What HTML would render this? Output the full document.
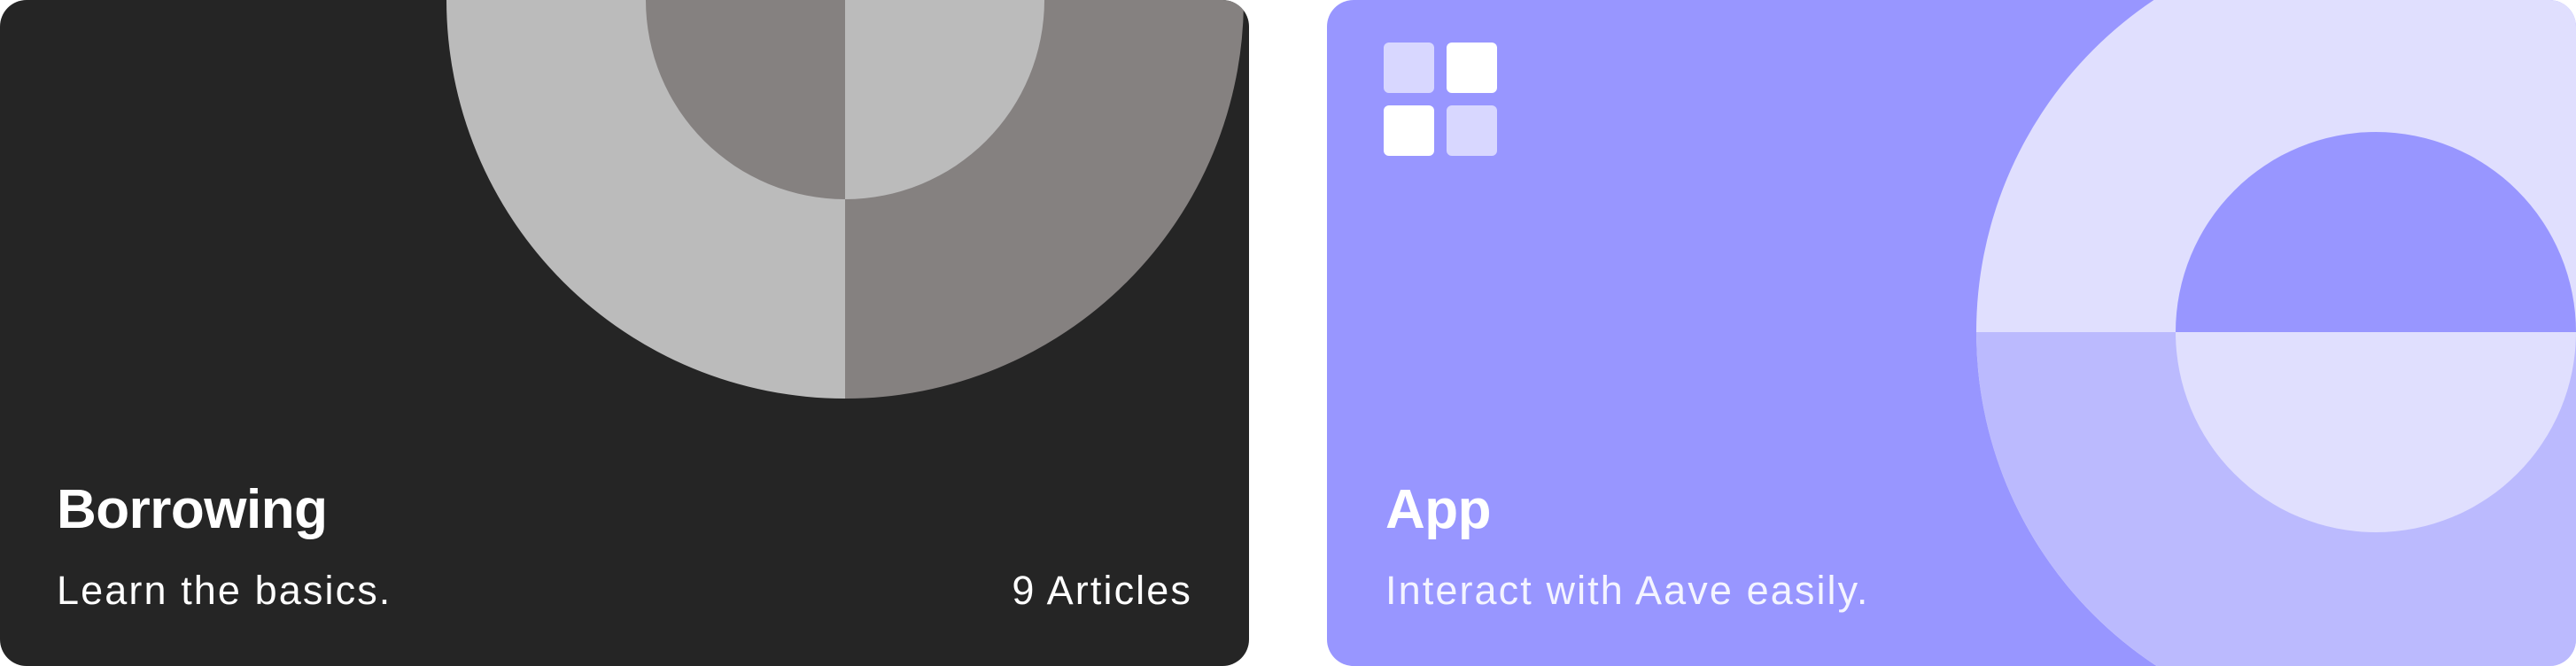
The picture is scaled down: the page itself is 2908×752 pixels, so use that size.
<!DOCTYPE html>
<html><head><meta charset="utf-8"><style>
html,body{margin:0;padding:0;background:#fff;width:2908px;height:752px;overflow:hidden;font-family:"Liberation Sans",sans-serif}
.card{position:absolute;top:0;height:752px;border-radius:30px;overflow:hidden}
.c1{left:0;width:1410px;background:#252525}
.c2{left:1498px;width:1410px;background:#9896ff}
svg{position:absolute;left:0;top:0}
.t{position:absolute;color:#fff;font-weight:bold;font-size:62px;line-height:70px;top:541px;letter-spacing:-0.5px}
.s{position:absolute;color:#fff;font-size:45px;line-height:50px;top:642px;letter-spacing:2.1px}
.sq{position:absolute;width:57px;height:57px;border-radius:6px}
</style></head><body>
<div class="card c1">
<svg width="1410" height="752">
<path d="M504 0 A450 450 0 0 0 954 450 L954 0Z" fill="#bbbbbb"/>
<path d="M954 0 L954 450 A450 450 0 0 0 1404 0Z" fill="#858180"/>
<path d="M729 0 A225 225 0 0 0 954 225 L954 0Z" fill="#858180"/>
<path d="M954 0 L954 225 A225 225 0 0 0 1179 0Z" fill="#bbbbbb"/>
</svg>
<div class="t" style="left:64px">Borrowing</div>
<div class="s" style="left:64px">Learn the basics.</div>
<div class="s" style="right:64px">9 Articles</div>
</div>
<div class="card c2">
<svg width="1410" height="752">
<circle cx="1184" cy="375" r="451" fill="#e0dffe"/>
<path d="M733 375 A451 451 0 0 0 1635 375Z" fill="#bbbafe"/>
<path d="M958 375 A226 226 0 0 1 1410 375Z" fill="#9896ff"/>
<path d="M958 375 A226 226 0 0 0 1410 375Z" fill="#e0dffe"/>
</svg>
<div class="sq" style="left:64px;top:48px;background:#d8d7ff"></div>
<div class="sq" style="left:135px;top:48px;background:#fff"></div>
<div class="sq" style="left:64px;top:119px;background:#fff"></div>
<div class="sq" style="left:135px;top:119px;background:#d8d7ff"></div>
<div class="t" style="left:66px">App</div>
<div class="s" style="left:66px;color:#f4f4ff">Interact with Aave easily.</div>
</div>
</body></html>
